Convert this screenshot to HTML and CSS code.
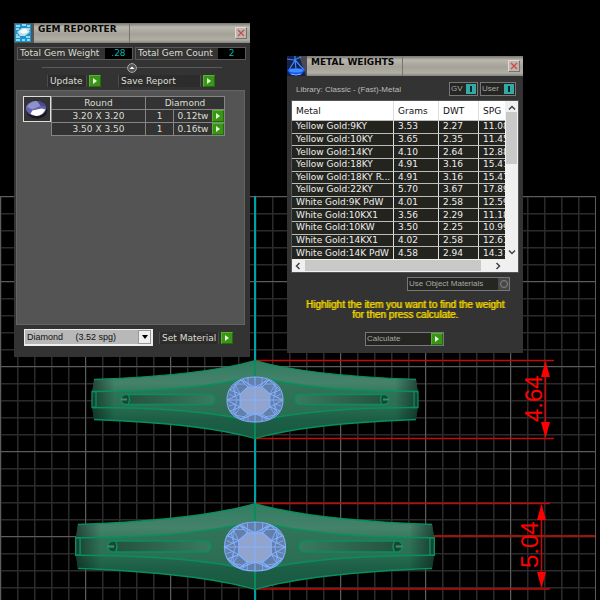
FILE: index.html
```html
<!DOCTYPE html>
<html lang="en">
<head>
<meta charset="utf-8">
<title>Gem Reporter and Metal Weights</title>
<link rel="stylesheet" href="styles.css">
</head>
<body>
<svg class="scene" aria-hidden="true">
  <defs>
    <pattern id="minor" x="0" y="196" width="17" height="17" patternUnits="userSpaceOnUse">
      <path d="M.5 0V17M0 .5H17" stroke="#2b2b2b" stroke-width="2" fill="none"/>
    </pattern>
    <pattern id="major" x="0" y="196" width="85" height="85" patternUnits="userSpaceOnUse">
      <path d="M.5 0V85M0 .5H85" stroke="#5c5c5c" stroke-width="1" fill="none"/>
    </pattern>
    <linearGradient id="band" x1="0" y1="0" x2="0" y2="1">
      <stop offset="0" stop-color="#2f7d60"/>
      <stop offset=".28" stop-color="#45826b"/>
      <stop offset=".5" stop-color="#2f7358"/>
      <stop offset=".75" stop-color="#1c5f46"/>
      <stop offset="1" stop-color="#195a41"/>
    </linearGradient>
    <linearGradient id="slot">
      <stop offset="0" stop-color="#3a7a61"/>
      <stop offset="1" stop-color="#25523f"/>
    </linearGradient>
    <linearGradient id="ends">
      <stop offset="0" stop-color="#06140f" stop-opacity=".55"/>
      <stop offset=".07" stop-color="#06140f" stop-opacity="0"/>
      <stop offset=".93" stop-color="#06140f" stop-opacity="0"/>
      <stop offset="1" stop-color="#06140f" stop-opacity=".55"/>
    </linearGradient>
    <g id="half" fill="none" stroke="#078f5e" stroke-width="1.3">
      <path d="M0-39Q52-24 161-20M0 39Q52 24 161 20M0-23Q60-8 162-8M0 22Q60 8 162 8"/>
      <path d="M163-8V8M159-8V8H163V-8ZM0-39V-23M0 22V39"/>
      <path d="M45-5H127V5H45A5 5 0 0 1 45-5Z" fill="url(#slot)"/>
      <path d="M127-5H129A5 5 0 0 1 129 5H127Q124 0 127-5Z" fill="#174734"/>
      <path d="M128-1H134V1H128Z" fill="#43866b" stroke="none"/>
    </g>
    <g id="gem" fill="none" stroke="#82b1ff" stroke-width="1">
      <path d="M0-23C15-23 28-16 28 0S15 22 0 22-28 16-28 0-15-23 0-23Z" fill="#647fa9"/>
      <path d="M-7-13H7L15-6V7L7 14H-7L-15 7V-6Z" fill="#91a4cd"/>
      <path d="M0-23V22M-28 0H28M-7-13L-14-20 0-13 14-20 7-13M-15-6L-25-10-14-20M15-6L25-10 14-20M-15 7L-25 11-14 19-7 14M15 7L25 11 14 19 7 14M-15-6L-28 0-15 7M15-6L28 0 15 7M-14 19L0 14 14 19"/>
      <path d="M-20-16L-15-6-7-13-7-22M20-16L15-6 7-13 7-22M-20 15L-15 7-7 14-7 21M20 15L15 7 7 14 7 21M-22-13L-18 0-22 13M22-13L18 0 22 13M-26-6L-20-3-20-16-10-16M26-6L20-3 20-16 10-16M-26 6L-20 4-20 15-10 17M26 6L20 4 20 15 10 17M-12-21L-4-13M12-21L4-13M-12 20L-4 14M12 20L4 14" stroke-width=".8"/>
    </g>
    <g id="ring">
      <path d="M0-39Q52-24 161-20Q165 0 161 20Q52 24 0 39Q-52 24-161 20Q-165 0-161-20Q-52-24 0-39Z" fill="url(#band)"/>
      <path d="M0-23Q60-8 162-8V8Q60 8 0 22Q-60 8-162 8V-8Q-60-8 0-23Z" fill="#2e7056" fill-opacity=".8"/>
      <path d="M0-39Q52-24 161-20Q165 0 161 20Q52 24 0 39Q-52 24-161 20Q-165 0-161-20Q-52-24 0-39Z" fill="url(#ends)"/>
      <use href="#half"/>
      <use href="#half" transform="scale(-1 1)"/>
    </g>
  </defs>
  <rect x="0" y="196" width="595" height="2000" fill="url(#minor)"/>
  <rect x="0" y="196" width="596" height="2000" fill="url(#major)"/>
  <path d="M255 196V600" stroke="#00a0a8" stroke-width="2"/>
  <path d="M432 536H595" stroke="#a01408" stroke-width="2"/>
  <g fill="none" stroke="#c80808" stroke-width="1.5">
    <path d="M256 360.500H554M256 438.500H554M256 503.500H550M256 589H550"/>
    <path d="M545.500 362V437M541.500 505V587"/>
  </g>
  <path d="M545.500 361L550 377H541ZM545.500 438L550 422H541ZM541.500 504L546 520H537ZM541.500 588L546 572H537Z" fill="#f00"/>
  <g class="dimension">
    <text transform="translate(542 422) rotate(-90)">4.64</text>
    <text transform="translate(538 568) rotate(-90)">5.04</text>
  </g>
  <use href="#ring" transform="translate(255 399.500)"/>
  <use href="#gem" transform="translate(255 400)"/>
  <use href="#ring" transform="translate(255 546.500) scale(1.100)"/>
  <use href="#gem" transform="translate(255 547) scale(1.090)"/>
</svg>

<section class="window gem-window" aria-label="Gem Reporter">
  <header class="titlebar">
    <svg class="app-icon" viewBox="0 0 20 20" aria-hidden="true">
      <rect width="20" height="20" fill="#555"/><rect x="1" y="1" width="16" height="18" fill="#1696ce"/>
      <path d="M2 3H6M8 2H12M13 3H16M2 6H5M12 6H16M2 14H6M12 14H16M2 17H6M8 17H11M13 17H16M3 11V13" stroke="#c2edfa" stroke-width="1.300"/>
      <path d="M3 9L8 5H14L16 9 11 13H6Z" fill="#bfdce6"/><path d="M5 9L9 6H12L14 9 10 11Z" fill="#f2fafc"/>
    </svg>
    <h1>GEM REPORTER</h1>
    <button class="close" aria-label="Close"><svg viewBox="0 0 8 8"><path d="M1 1L7 7M7 1L1 7"/></svg></button>
  </header>
  <div class="totals">
    <div class="total weight"><span>Total Gem Weight</span><output>.28</output></div>
    <div class="total count"><span>Total Gem Count</span><output>2</output></div>
  </div>
  <div class="divider"><button class="collapse" aria-label="Collapse"><svg viewBox="0 0 10 10"><circle cx="5" cy="5" r="4.400"/><path d="M2.500 6L5 3.500 7.500 6Z"/></svg></button></div>
  <div class="actions">
    <button class="action update"><span>Update</span><i class="go"></i></button>
    <button class="action save"><span>Save Report</span><i class="go"></i></button>
  </div>
  <div class="report">
    <svg class="thumb" viewBox="0 0 28 25" aria-hidden="true">
      <ellipse cx="14" cy="14" rx="11" ry="9" fill="#181820"/><ellipse cx="13" cy="12" rx="11" ry="8" fill="#6262ae"/>
      <path d="M3 10Q7 4 14 4L18 9 9 13Z" fill="#8d92cc"/><path d="M14 4Q22 5 23 10L18 9Z" fill="#4a4a98"/>
      <path d="M7 18L9 14 19 12 23 13Q20 20 13 20Z" fill="#fff"/>
    </svg>
    <table class="gems">
      <colgroup><col class="c-size"><col class="c-count"><col></colgroup>
      <thead><tr><th scope="col">Round</th><th scope="col" colspan="2">Diamond</th></tr></thead>
      <tbody>
        <tr><td>3.20 X 3.20</td><td>1</td><td><div class="tw"><span>0.12tw</span><button class="go" aria-label="Open 3.20 X 3.20"></button></div></td></tr>
        <tr><td>3.50 X 3.50</td><td>1</td><td><div class="tw"><span>0.16tw</span><button class="go" aria-label="Open 3.50 X 3.50"></button></div></td></tr>
      </tbody>
    </table>
  </div>
  <div class="material">
    <div class="picker">
      <select aria-label="Material"><option>Diamond&nbsp;&nbsp;&nbsp;&nbsp; (3.52 spg)</option></select>
      <i class="arrow"></i>
    </div>
    <button class="action set"><span>Set Material</span><i class="go"></i></button>
  </div>
</section>

<section class="window metal-window" aria-label="Metal Weights">
  <header class="titlebar">
    <svg class="app-icon" viewBox="0 0 20 20" aria-hidden="true">
      <rect width="20" height="20" fill="#4a4b52"/>
      <path d="M0 0H12L19 20H0Z" fill="#16204a"/>
      <path d="M0 3L7 4 14 1M8 0V4L2 14M8 4L17 14M8 4L9 13" stroke="#3d8bff" stroke-width="1.200" fill="none"/>
      <path d="M0 14Q9 10 18 14L15 18Q9 20 3 18Z" fill="#1453ed"/><ellipse cx="9" cy="14.500" rx="7.500" ry="2" fill="#3f8dff"/><path d="M4 18Q9 20 14 18" stroke="#7abaff" fill="none"/>
    </svg>
    <h1>METAL WEIGHTS</h1>
    <button class="close" aria-label="Close"><svg viewBox="0 0 8 8"><path d="M1 1L7 7M7 1L1 7"/></svg></button>
  </header>
  <div class="library">
    <p>Library: Classic - (Fast)-Metal</p>
    <button class="toggle gv"><span>GV</span><i></i></button>
    <button class="toggle user"><span>User</span><i></i></button>
  </div>
  <div class="listview">
    <div class="viewport">
      <table class="metals">
        <colgroup><col class="c-metal"><col class="c-grams"><col class="c-dwt"><col></colgroup>
        <thead><tr><th scope="col">Metal</th><th scope="col">Grams</th><th scope="col">DWT</th><th scope="col">SPG</th></tr></thead>
        <tbody>
          <tr><td>Yellow Gold:9KY</td><td>3.53</td><td>2.27</td><td>11.08</td></tr>
          <tr><td>Yellow Gold:10KY</td><td>3.65</td><td>2.35</td><td>11.45</td></tr>
          <tr><td>Yellow Gold:14KY</td><td>4.10</td><td>2.64</td><td>12.88</td></tr>
          <tr><td>Yellow Gold:18KY</td><td>4.91</td><td>3.16</td><td>15.41</td></tr>
          <tr><td>Yellow Gold:18KY R...</td><td>4.91</td><td>3.16</td><td>15.41</td></tr>
          <tr><td>Yellow Gold:22KY</td><td>5.70</td><td>3.67</td><td>17.89</td></tr>
          <tr><td>White Gold:9K PdW</td><td>4.01</td><td>2.58</td><td>12.59</td></tr>
          <tr><td>White Gold:10KX1</td><td>3.56</td><td>2.29</td><td>11.18</td></tr>
          <tr><td>White Gold:10KW</td><td>3.50</td><td>2.25</td><td>10.99</td></tr>
          <tr><td>White Gold:14KX1</td><td>4.02</td><td>2.58</td><td>12.61</td></tr>
          <tr><td>White Gold:14K PdW</td><td>4.58</td><td>2.94</td><td>14.37</td></tr>
        </tbody>
      </table>
    </div>
    <div class="vbar"><svg viewBox="0 0 8 8"><path d="M1 5.500L4 2.500 7 5.500"/></svg><i></i><svg viewBox="0 0 8 8"><path d="M1 2.500L4 5.500 7 2.500"/></svg></div>
    <div class="hbar"><svg viewBox="0 0 8 8"><path d="M5.500 1L2.500 4 5.500 7"/></svg><i></i><svg viewBox="0 0 8 8"><path d="M2.500 1L5.500 4 2.500 7"/></svg></div>
  </div>
  <button class="framed object"><span>Use Object Materials</span><i class="radio"></i></button>
  <p class="hint">Highlight the item you want to find the weight<br>for then press calculate.</p>
  <button class="framed calculate"><span>Calculate</span><i class="go"></i></button>
</section>
</body>
</html>
```

FILE: styles.css
```css
* { box-sizing: border-box; }
body {
  margin: 0;
  min-height: 100vh;
  background: #000;
  position: relative;
  overflow: hidden;
  color: #deded2;
  font-family: "DejaVu Sans", Verdana, sans-serif;
  font-size: 9px;
  line-height: 12px;
}
button, select { margin: 0; padding: 0; border: 0; background: none; color: inherit; font: inherit; }
h1, p { margin: 0; }
i { display: block; }

/* Modelling viewport */
.scene { position: absolute; inset: 0; width: 100%; height: 100%; }
.dimension { fill: #f00; font: 24px "Liberation Sans", Arial, sans-serif; }

/* Tool windows */
.window { position: absolute; width: 236px; display: flex; flex-direction: column; background: #333; }
.gem-window { left: 14px; top: 23px; height: 334px; }
.metal-window { left: 287px; top: 56px; height: 297px; }
.titlebar {
  display: flex;
  height: 20px;
  flex: none;
  background: linear-gradient(#777570, #bab8ae 20%, #a3a198 55%, #b0aea5 85%, #85837e);
  color: #080808;
}
.app-icon { width: 20px; height: 20px; flex: none; }
.titlebar h1 {
  width: 96px;
  padding-left: 4px;
  border-right: 1px solid #77756e;
  font-size: 9px;
  line-height: 12px;
  white-space: nowrap;
}
.close {
  width: 12px;
  height: 12px;
  margin: 4px 3px 0 auto;
  border: 1px solid #77746f;
  border-top-color: #dedbd4;
  border-left-color: #dedbd4;
  background: #bbb7b0;
  padding: 1px;
}
.close svg { display: block; width: 8px; height: 8px; stroke: #cf4947; stroke-width: 1.3; }

/* Shared green arrow button */
.go {
  display: grid;
  place-items: center;
  width: 12px;
  height: 12px;
  flex: none;
  background: #389516;
  border: 1px solid #56b42f;
  border-right-color: #246c0b;
  border-bottom-color: #246c0b;
}
.go::before {
  content: "";
  border: 3px solid transparent;
  border-left: 4px solid #e7f7de;
  border-right: 0;
}

/* Gem reporter */
.totals { display: flex; gap: 2px; padding: 4px 4px 0 3px; }
.total { display: flex; height: 13px; border: 1px solid #595959; line-height: 11px; white-space: nowrap; }
.total span { flex: 1; padding: 0 2px; }
.total output { width: 27px; background: #000; color: #0bb3aa; text-align: center; }
.weight { flex: 116; }
.count { flex: 111; }
.divider { display: flex; align-items: center; height: 15px; margin: 0 28px; }
.divider::before, .divider::after { content: ""; flex: 1; height: 1px; background: #5a5a5a; }
.collapse { width: 10px; height: 10px; }
.collapse svg { display: block; width: 10px; height: 10px; fill: #555; stroke: #aaa; }
.collapse path { fill: #fff; stroke: none; }
.actions { display: flex; gap: 17px; padding-left: 33px; }
.action { display: flex; align-items: center; gap: 2px; height: 12px; text-align: left; white-space: nowrap; }
.action span { height: 12px; padding-left: 2px; border: 1px solid #4b4b4b; border-width: 0 1px; background: #2c2c2c; }
.update span { width: 40px; }
.save span { width: 83px; }
.set span { width: 60px; }
.report { flex: 1; display: flex; align-items: flex-start; margin: 3px 5px 0 2px; padding: 5px 6px; border: 1px solid #646464; background: #545454; }
.thumb { width: 28px; height: 26px; border: 1px solid #ddd; background: #333; flex: none; }
.gems { width: 174px; border-collapse: collapse; table-layout: fixed; background: #333; }
.c-size { width: 94px; }
.c-count { width: 28px; }
.gems th, .gems td { height: 13px; padding: 0; border: 1px solid #858585; font-weight: normal; line-height: 12px; text-align: center; }
.tw { display: flex; }
.tw span { flex: 1; }
.material { display: flex; align-items: flex-start; gap: 6px; height: 32px; flex: none; padding: 4px 0 0 10px; }
.picker { display: flex; width: 129px; height: 17px; border: 1px solid #eee; border-width: 1px 2px 2px 1px; background: #b8b8b8; position: relative; }
.picker select { appearance: none; flex: 1; padding-left: 2px; color: #111; font: 9px/14px "Liberation Sans", Arial, sans-serif; }
.arrow { position: absolute; right: 0; top: 0; display: grid; place-items: center; width: 13px; height: 14px; border: 1px solid #999; background: #f0f0f0; pointer-events: none; }
.arrow::before { content: ""; border: 3px solid transparent; border-top: 4px solid #000; border-bottom: 0; }
.set { margin-top: 3px; }

/* Metal weights */
.library { display: flex; align-items: center; gap: 2px; padding: 6px 7px 0 9px; }
.library p { flex: 1; color: #bbb; font: 8px/13px "Liberation Sans", Arial, sans-serif; }
.toggle, .framed { display: flex; align-items: center; height: 14px; border: 1px solid #777; background: #252521; color: #a8a8a8; font: 8px/12px "Liberation Sans", Arial, sans-serif; }
.toggle span, .framed span { flex: 1; padding-left: 1px; text-align: left; white-space: nowrap; }
.gv { width: 29px; }
.user { width: 36px; }
.toggle i { display: grid; place-items: center; width: 10px; height: 10px; margin-right: 1px; background: #34aaa8; }
.toggle i::before { content: ""; width: 2px; height: 6px; background: #06282a; }
.listview {
  display: grid;
  grid-template-columns: 1fr 13px;
  grid-template-rows: 158px 13px;
  margin: 4px 4px 0;
  border: 1px solid #555;
  background: #f0f0f0;
}
.viewport { overflow: hidden; background: #24241f; }
.metals { width: 228px; height: 158px; border-collapse: separate; border-spacing: 0; table-layout: fixed; }
.c-metal { width: 102px; }
.c-grams { width: 45px; }
.c-dwt { width: 40px; }
.metals th { height: 19px; padding: 0 4px; border-right: 1px solid #ddd; background: #fff; color: #111; font-weight: normal; text-align: left; }
.metals td { padding: 0 4px; border-right: 1px solid #ddd; border-top: 1px solid #bbb; color: #eee; line-height: 11px; white-space: nowrap; }
.vbar, .hbar { display: flex; align-items: center; }
.vbar { flex-direction: column; padding: 3px 0; }
.vbar i { width: 11px; height: 52px; margin: 0 0 auto; background: #c9c9c9; }
.hbar { grid-column: 1 / -1; padding: 0 16px 0 2px; }
.hbar i { flex: 1; height: 11px; margin: 0 13px 0 3px; background: #c9c9c9; }
.vbar svg, .hbar svg { width: 8px; height: 8px; flex: none; fill: none; stroke: #444; stroke-width: 1.5; }
.framed { flex: none; }
.object { width: 103px; margin: 4px 13px 0 auto; }
.radio { width: 11px; height: 12px; display: grid; place-items: center; background: #474747; }
.radio::before { content: ""; width: 6px; height: 6px; border: 1px solid #888; border-radius: 50%; }
.hint { margin-top: 9px; color: #f2d600; font: 10px/10px "Liberation Sans", Arial, sans-serif; text-align: center; text-shadow: 1px 0 #b8a300; }
.calculate { width: 79px; margin: 12px auto 0 78px; }
```
